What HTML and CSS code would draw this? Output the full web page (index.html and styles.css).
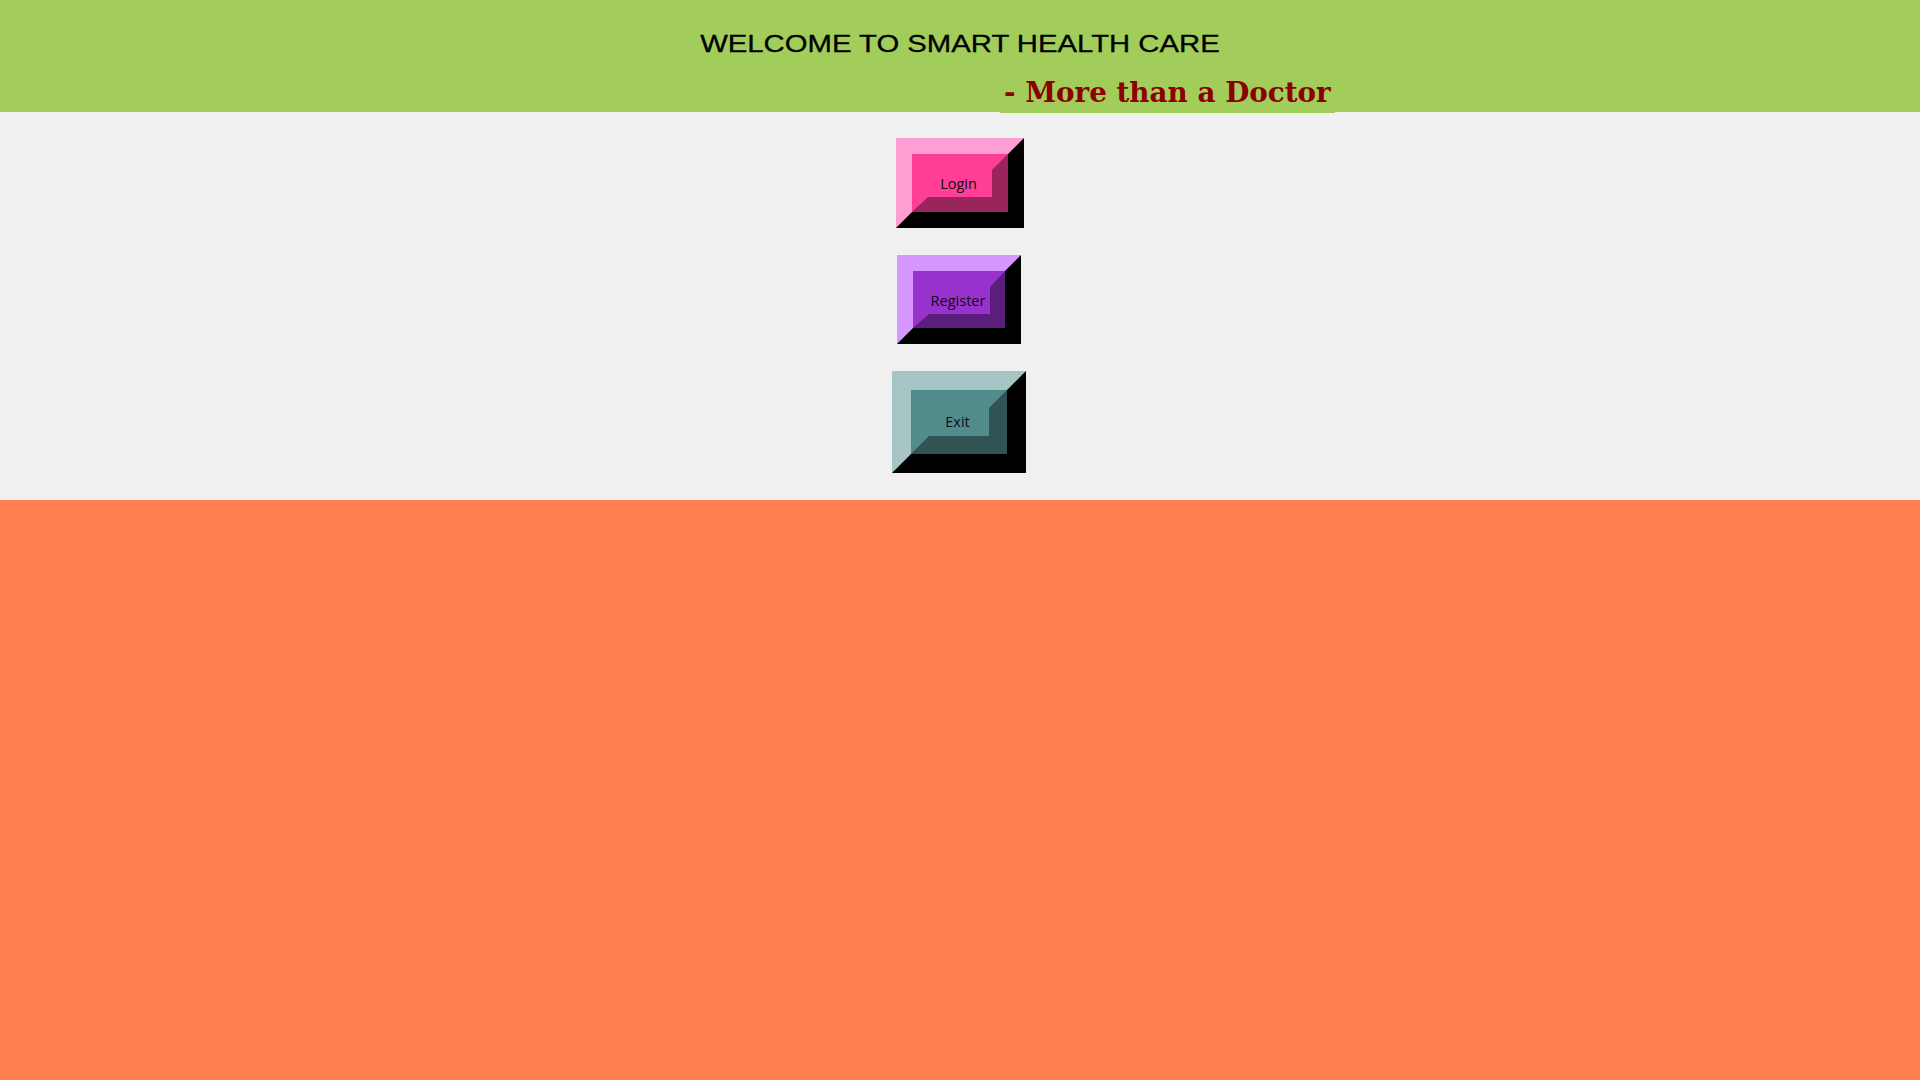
FILE: index.html
```html
<!DOCTYPE html>
<html lang="en">
<head>
<meta charset="utf-8">
<title>Smart Health Care</title>
<link rel="stylesheet" href="styles.css">
</head>
<body>
  <header class="header">
    <h1 class="title"><span class="title-text">WELCOME TO SMART HEALTH CARE</span></h1>
    <div class="subtitle">- More than a Doctor</div>
  </header>
  <main class="menu">
    <div class="btn btn-login">
      <div class="btn-inner"><span class="btn-label">Login</span></div>
    </div>
    <div class="btn btn-register">
      <div class="btn-inner"><span class="btn-label">Register</span></div>
    </div>
    <div class="btn btn-exit">
      <div class="btn-inner"><span class="btn-label">Exit</span></div>
    </div>
  </main>
  <div class="footer"></div>
</body>
</html>
```

FILE: styles.css
```css
html, body {
  margin: 0;
  padding: 0;
}

body {
  width: 1920px;
  height: 1080px;
  background: #ff7f50;
  display: flex;
  flex-direction: column;
  overflow: hidden;
}

.header {
  height: 112px;
  flex: none;
  box-sizing: border-box;
  background: #a2cd5a;
  padding-top: 32px;
  display: flex;
  flex-direction: column;
  align-items: flex-start;
}

.title {
  margin: 0;
  width: 1920px;
  text-align: center;
  font-family: "Liberation Sans", Arial, sans-serif;
  font-weight: normal;
  font-size: 24px;
  line-height: 24px;
  color: #000;
  white-space: nowrap;
}

.title-text {
  display: inline-block;
  transform: scaleX(1.22);
  -webkit-text-stroke: 0.3px #000;
}

.subtitle {
  margin: 23px 0 0 1000px;
  padding: 0 4px 6px;
  background: #a2cd5a;
  font-family: "DejaVu Serif", "Liberation Serif", serif;
  font-weight: bold;
  font-size: 27.8px;
  line-height: 28px;
  color: #8b0000;
  white-space: nowrap;
  position: relative;
  z-index: 1;
}

.menu {
  background: #f0f0f0;
  height: 388px;
  flex: none;
  box-sizing: border-box;
  padding-top: 26px;
  display: flex;
  flex-direction: column;
  align-items: center;
  gap: 27px;
}

.footer {
  flex: 1;
  background: #ff7f50;
}

.btn {
  box-sizing: border-box;
  border-style: solid;
  border-right-color: #000;
  border-bottom-color: #000;
  display: flex;
}

.btn-inner {
  flex: 1;
  border-style: solid;
  display: flex;
  align-items: center;
  justify-content: center;
}

.btn-label {
  font-family: "Open Sans", "Noto Sans", sans-serif;
  font-size: 14.5px;
  line-height: 18px;
  color: #0c0c18;
  margin-left: -3px;
}

.btn-login {
  width: 128px;
  height: 90px;
  border-width: 16px;
  border-top-color: #ff9ed2;
  border-left-color: #ff9ed2;
  background: #ff3e96;
}
.btn-login .btn-inner {
  border-width: 16px 16px 15px 16px;
  border-top-color: #ff3e96;
  border-left-color: #ff3e96;
  border-right-color: #99255a;
  border-bottom-color: #99255a;
  background: #ff3e96;
}

.btn-register {
  width: 124px;
  height: 89px;
  border-width: 16px;
  border-top-color: #d698ff;
  border-left-color: #d698ff;
  background: #9932cc;
  margin-left: -2px;
}
.btn-register .btn-inner {
  border-width: 16px 15px 14px 16px;
  border-top-color: #9932cc;
  border-left-color: #9932cc;
  border-right-color: #5b1e7a;
  border-bottom-color: #5b1e7a;
  background: #9932cc;
}

.btn-exit {
  width: 134px;
  height: 102px;
  border-width: 19px;
  border-top-color: #a8c5c5;
  border-left-color: #a8c5c5;
  background: #528b8b;
  margin-left: -2px;
}
.btn-exit .btn-inner {
  border-width: 18px;
  border-top-color: #528b8b;
  border-left-color: #528b8b;
  border-right-color: #315353;
  border-bottom-color: #315353;
  background: #528b8b;
}
```
